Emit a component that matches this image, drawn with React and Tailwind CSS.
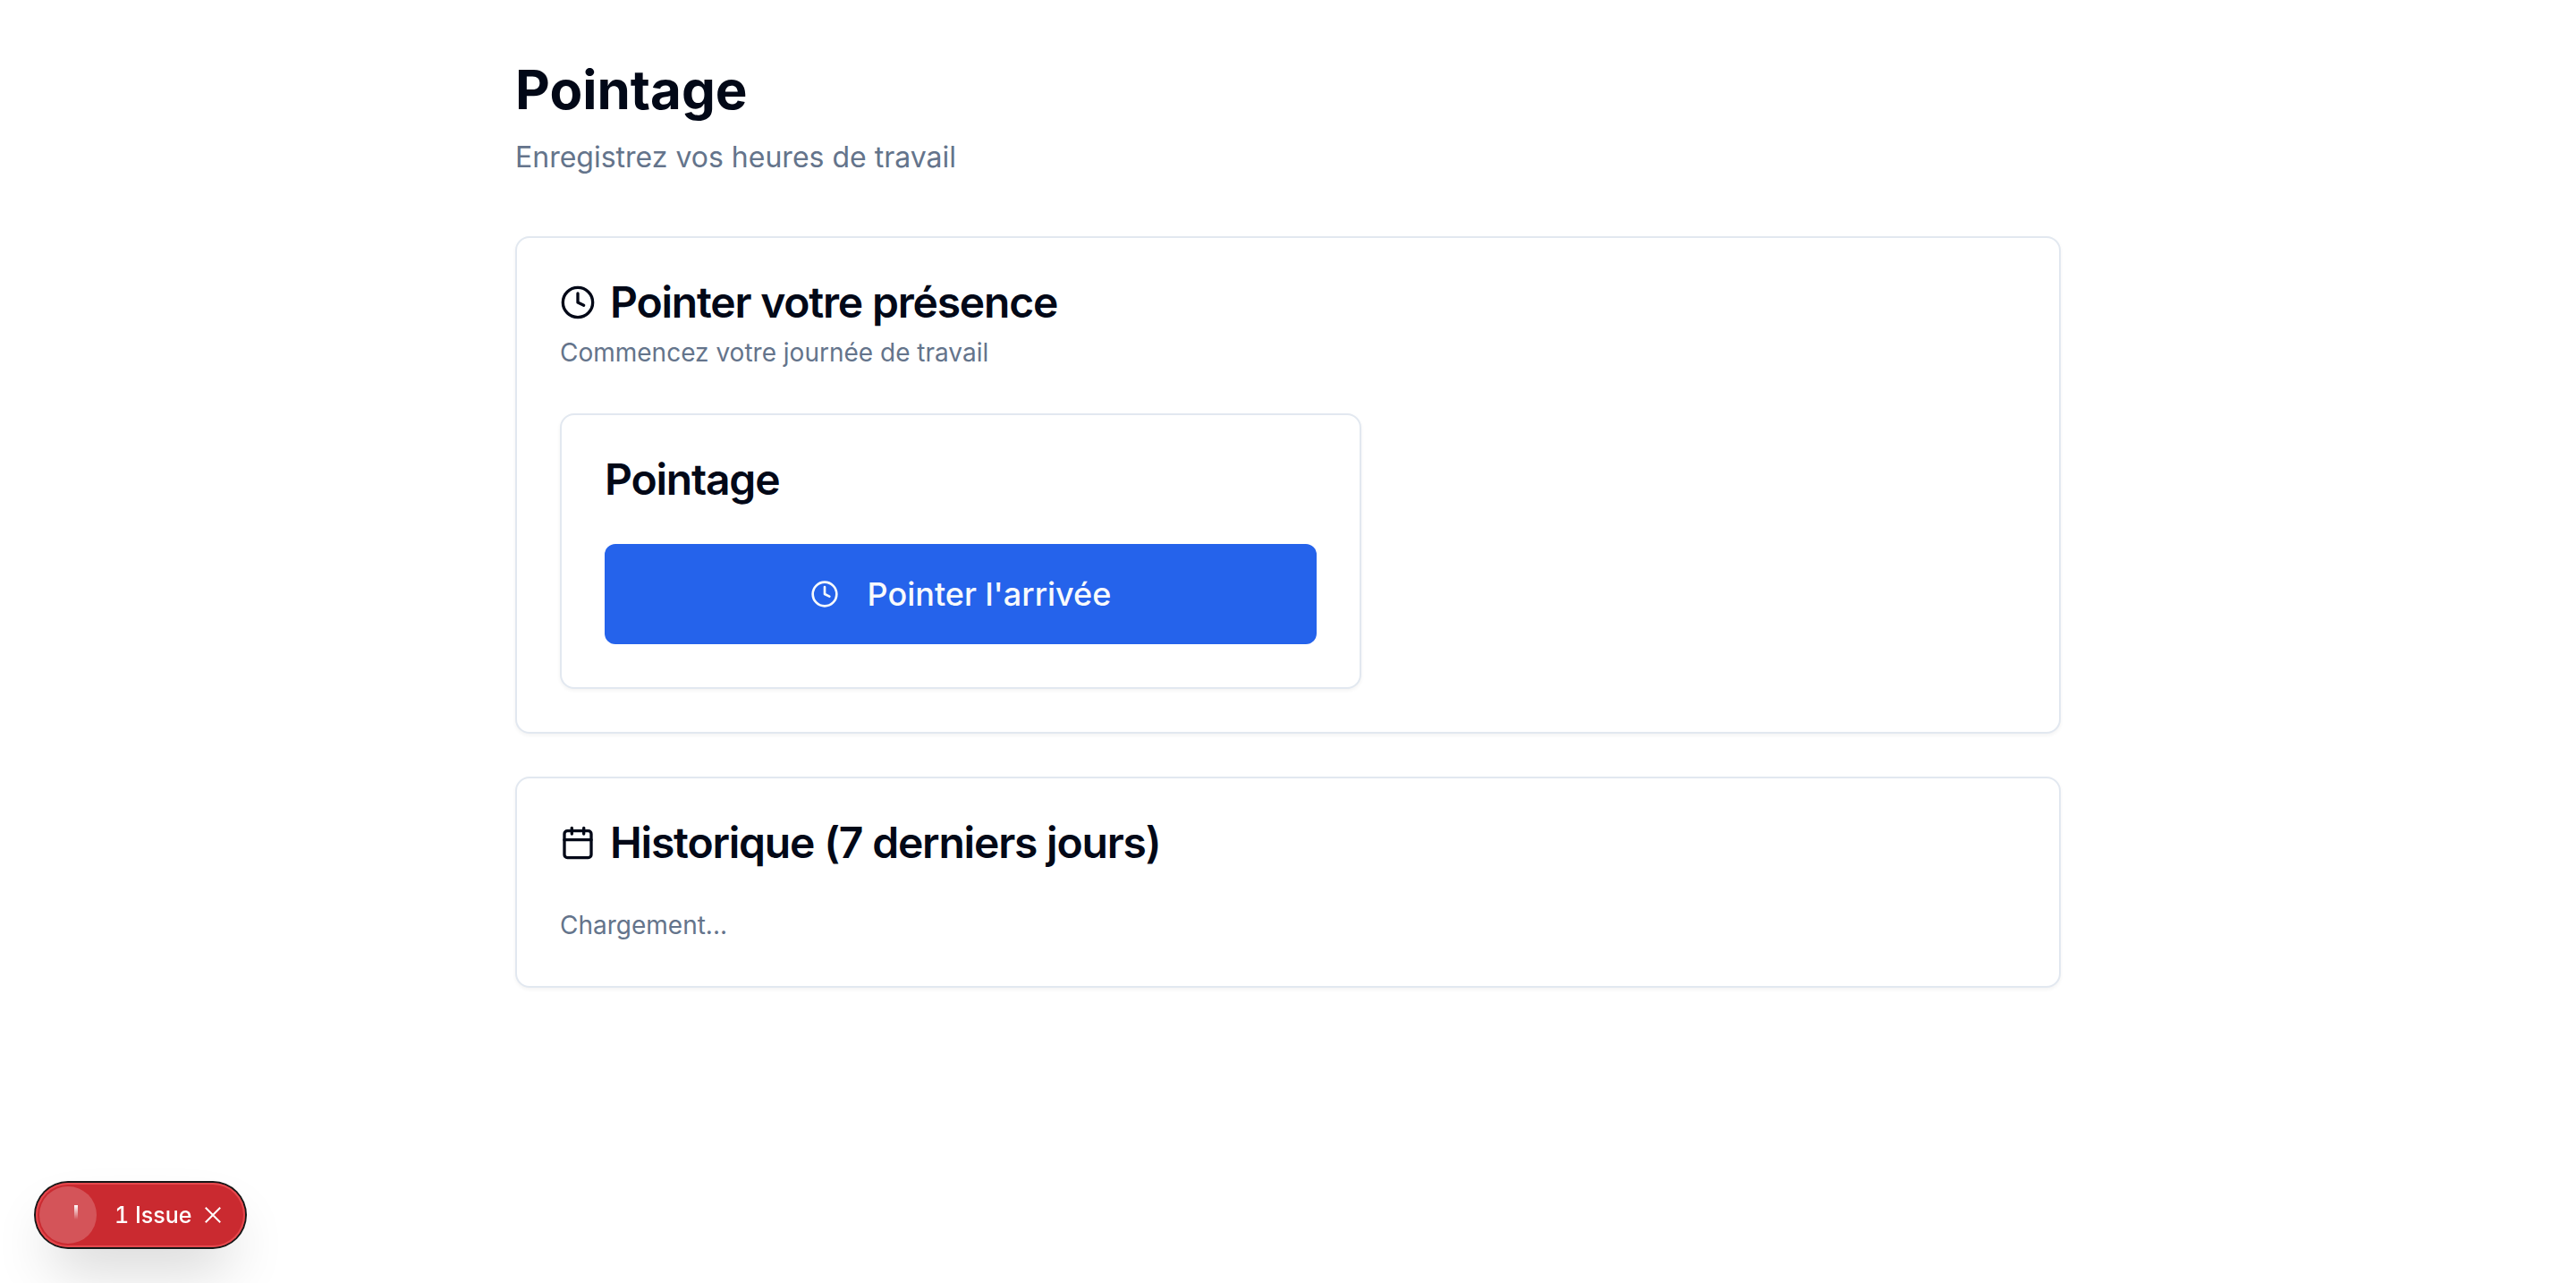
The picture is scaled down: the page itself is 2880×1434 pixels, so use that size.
import { Calendar, Clock } from "lucide-react";

function Card({ className = "", children }) {
  return (
    <section className={`rounded-2xl border-2 border-[#e2e8f0] bg-white shadow-[0_2px_4px_0_rgb(0_0_0/0.05)] ${className}`}>
      {children}
    </section>
  );
}

function CardTitle({ icon: Icon, children }) {
  return (
    <h3 className="flex items-center gap-4 text-5xl leading-none font-semibold tracking-tight">
      {Icon && <Icon className="size-10 shrink-0" />}
      {children}
    </h3>
  );
}

function IssueBadge() {
  return (
    <div className="fixed bottom-10 left-10 flex h-18 items-center rounded-full bg-[#ca2a30] p-1 text-white shadow-[0_0_0_2px_#171717,inset_0_0_0_2px_#e5484d,0_32px_64px_-16px_rgb(0_0_0/0.24)]">
      <button type="button" aria-label="Open developer tools" className="flex size-16 items-center justify-center rounded-full bg-white/20">
        <svg viewBox="0 0 64 64" className="size-16" fill="none">
          <defs>
            <linearGradient id="stem" x1="0" y1="21" x2="0" y2="37" gradientUnits="userSpaceOnUse">
              <stop stopColor="#fff" />
              <stop offset="1" stopColor="#fff" stopOpacity="0" />
            </linearGradient>
          </defs>
          <rect x="39" y="21" width="4" height="16" fill="url(#stem)" />
        </svg>
      </button>
      <button type="button" className="pl-5 text-[25px] leading-none font-medium tabular-nums">1 Issue</button>
      <button type="button" aria-label="Close" className="mr-2 flex size-12 items-center justify-center">
        <svg viewBox="0 0 18 18" className="size-[18px]" stroke="currentColor" strokeWidth="2" strokeLinecap="square">
          <path d="M1.5 1.5l15 15M16.5 1.5l-15 15" />
        </svg>
      </button>
    </div>
  );
}

export default function App() {
  return (
    <div className="min-h-screen bg-white font-['Inter',sans-serif] text-[#020817]">
      <main className="mx-auto max-w-448 px-8 py-16">
        <header className="mb-16">
          <h1 className="text-6xl leading-[72px] font-bold">Pointage</h1>
          <p className="mt-4 text-[32px] leading-12 text-[#64748b]">Enregistrez vos heures de travail</p>
        </header>
        <div className="space-y-12">
          <Card className="p-12">
            <CardTitle icon={Clock}>Pointer votre présence</CardTitle>
            <p className="mt-3 text-[28px] leading-10 text-[#64748b]">Commencez votre journée de travail</p>
            <Card className="mt-12 max-w-4xl p-12">
              <CardTitle>Pointage</CardTitle>
              <button type="button" className="mt-12 flex h-28 w-full items-center justify-center gap-8 rounded-xl bg-[#2563eb] text-4xl font-medium text-[#f8fafc]">
                <Clock className="size-8 shrink-0" />
                Pointer l'arrivée
              </button>
            </Card>
          </Card>
          <Card className="p-12">
            <CardTitle icon={Calendar}>Historique (7 derniers jours)</CardTitle>
            <p className="mt-12 text-[28px] leading-10 text-[#64748b]">Chargement...</p>
          </Card>
        </div>
      </main>
      <IssueBadge />
    </div>
  );
}
